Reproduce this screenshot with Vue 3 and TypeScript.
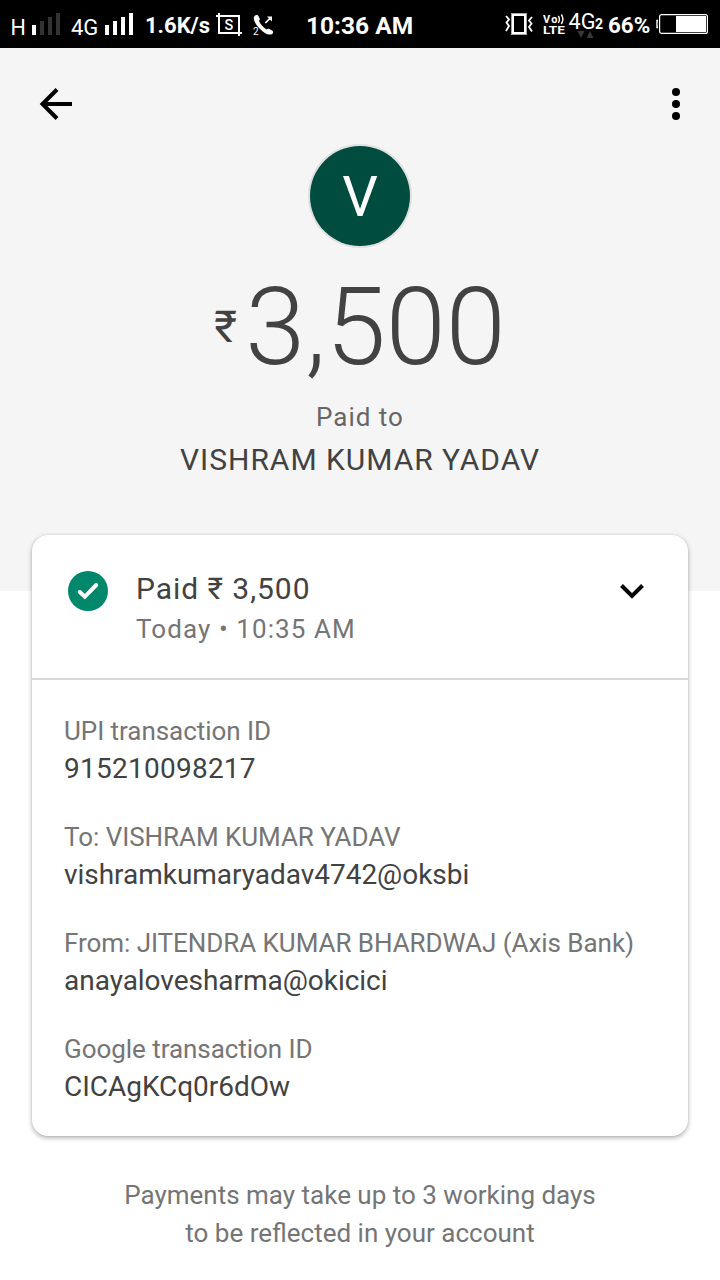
<script setup lang="ts">
interface Detail {
  label: string
  value: string
  numeric?: boolean
}

const details: Detail[] = [
  { label: 'UPI transaction ID', value: '915210098217', numeric: true },
  { label: 'To: VISHRAM KUMAR YADAV', value: 'vishramkumaryadav4742@oksbi' },
  { label: 'From: JITENDRA KUMAR BHARDWAJ (Axis Bank)', value: 'anayalovesharma@okicici' },
  { label: 'Google transaction ID', value: 'CICAgKCq0r6dOw' },
]
</script>

<template>
  <div class="screen">
    <div class="status">
      <span class="net net-h">H</span>
      <svg class="bars" width="28" height="22" viewBox="0 0 28 22">
        <rect x="0" y="12" width="4" height="10" fill="#fff" />
        <rect x="8" y="8" width="4" height="14" fill="#333" />
        <rect x="16" y="4" width="4" height="18" fill="#333" />
        <rect x="24" y="0" width="4" height="22" fill="#333" />
      </svg>
      <span class="net net-4g">4G</span>
      <svg class="bars" width="28" height="22" viewBox="0 0 28 22">
        <path fill="#fff" d="M0 12h4v10H0zM8 8h4v14H8zM16 4h4v18h-4zM24 0h4v22h-4z" />
      </svg>
      <span class="speed">1.6K/s</span>
      <svg class="crop" width="26" height="24" viewBox="0 0 26 24">
        <path d="M3 0v20H26M0 3h23V23" fill="none" stroke="#fff" stroke-width="2" />
        <text x="13" y="16.6" text-anchor="middle" fill="#fff" font-size="14.5" font-weight="500">S</text>
      </svg>
      <svg class="call" width="22" height="22" viewBox="0 0 22 22">
        <path d="M1.6 1C3-.4 4.8-.1 5.6 1.3l1 2c.4 1 .1 1.8-.7 2.5 1.2 3.2 4.4 6.9 7.8 8.6.9-.8 1.7-1 2.6-.5l2.7 1.6c1.5.9 1.5 2.4.2 3.4-3.4 2-8.7-.9-12.9-5.7C2.2 8.7-.7 3.7 1.6 1z" fill="#fff" />
        <path d="M12.3 8 17.5 2.8" fill="none" stroke="#fff" stroke-width="1.7" />
        <path d="M14 1.5h5v5z" fill="#fff" />
        <text x="0" y="20" fill="#fff" font-size="10">2</text>
      </svg>
      <span class="time">10:36 AM</span>
      <svg class="vibrate" width="28" height="22" viewBox="0 0 28 22">
        <rect x="7" y="1" width="14" height="20" fill="none" stroke="#aaa" stroke-width="2" />
        <rect x="8" y="2" width="12" height="18" fill="none" stroke="#fff" stroke-width="2" />
        <path d="M1 3l3 3.5-2.5 3L4 13l-3 5M27 4l-3 3.5 2.5 3L24 14l3 4.5" fill="none" stroke="#fff" stroke-width="1.8" />
      </svg>
      <svg class="volte" width="22" height="22" viewBox="0 0 22 22">
        <g fill="#fff" font-weight="700">
          <text x="0" y="9" font-size="11" textLength="14.5">Vo</text>
          <text x="0" y="20" font-size="11.5" textLength="22" lengthAdjust="spacingAndGlyphs">LTE</text>
        </g>
        <path d="M15.3 2q2.3 3.3 0 7M18.3.5q3.300 4.500 0 9.500" fill="none" stroke="#fff" stroke-width="1.4" />
      </svg>
      <svg class="net4g" width="36" height="28" viewBox="0 0 36 28">
        <text x="-.5" y="17" fill="#fff" font-size="22.5" textLength="27" lengthAdjust="spacingAndGlyphs">4G</text>
        <text x="26" y="17" fill="#fff" font-size="14" font-weight="700">2</text>
        <path d="M8.5 19h7L12 26zM17.5 26h7L21 19z" fill="#383838" />
      </svg>
      <span class="percent">66%</span>
      <svg class="battery" width="52" height="20" viewBox="0 0 52 20">
        <path d="M2 6.5H1v7h1" fill="none" stroke="#fff" stroke-width="1.4" />
        <rect x="3.6" y=".6" width="47.8" height="18.8" rx="2" fill="none" stroke="#fff" stroke-width="1.2" />
        <rect x="20" y="2" width="30" height="16" fill="#fff" />
      </svg>
    </div>

    <header class="hero">
      <div class="toolbar">
        <svg width="32" height="32" viewBox="0 0 32 32">
          <path d="M17 1.5 2.5 16 17 30.5M2.5 16H32" fill="none" stroke="#000" stroke-width="4" />
        </svg>
        <svg width="8" height="32" viewBox="0 0 8 32">
          <circle cx="4" cy="4" r="4" />
          <circle cx="4" cy="16" r="4" />
          <circle cx="4" cy="28" r="4" />
        </svg>
      </div>
      <div class="avatar">V</div>
      <div class="amount"><span class="rupee">₹</span><span class="sum">3,500</span></div>
      <div class="paid-to">Paid to</div>
      <div class="payee">VISHRAM KUMAR YADAV</div>
    </header>

    <main class="card">
      <div class="summary">
        <svg class="check" width="40" height="40" viewBox="0 0 40 40">
          <circle cx="20" cy="20" r="20" fill="#00876c" />
          <path d="M11.8 21 16.8 25.8 28.2 14" fill="none" stroke="#fff" stroke-width="4" stroke-linecap="round" />
        </svg>
        <div class="summary-text">
          <div class="paid">Paid ₹ 3,500</div>
          <div class="when">Today • 10:35 AM</div>
        </div>
        <svg class="chevron" width="24" height="16" viewBox="0 0 24 16">
          <path d="M1.5 1.5 12 12 22.5 1.5" fill="none" stroke="#000" stroke-width="4" />
        </svg>
      </div>
      <dl class="details">
        <div v-for="item in details" :key="item.label" class="detail">
          <dt>{{ item.label }}</dt>
          <dd :class="{ numeric: item.numeric }">{{ item.value }}</dd>
        </div>
      </dl>
    </main>

    <footer class="note">Payments may take up to 3 working days<br />to be reflected in your account</footer>
  </div>
</template>

<style>
body {
  margin: 0;
  background: #fff;
}
</style>

<style scoped>
.screen {
  width: 720px;
  height: 1280px;
  overflow: hidden;
  background: #fff;
  font-family: Roboto, "Noto Sans", sans-serif;
  color: #424242;
}
svg {
  display: block;
  flex: none;
  overflow: visible;
}
.status {
  display: flex;
  align-items: flex-start;
  height: 48px;
  background: #000;
  color: #fff;
  white-space: nowrap;
}
.status span {
  flex: none;
  line-height: 26px;
}
.net {
  font-size: 22px;
  margin-top: 15px;
}
.net-h {
  width: 21.5px;
  margin-left: 10.5px;
  font-size: 21.5px;
}
.net-4g {
  width: 34px;
  margin-left: 11px;
}
.bars {
  margin-top: 13px;
}
.speed {
  width: 71px;
  margin: 13px 0 0 12px;
  font-size: 22px;
  font-weight: 700;
}
.crop {
  margin-top: 13px;
}
.call {
  margin: 15px 0 0 11px;
}
.time {
  width: 199px;
  margin: 13px 0 0 31px;
  font-size: 24.5px;
  font-weight: 700;
}
.vibrate {
  margin-top: 13px;
}
.volte {
  margin: 14px 0 0 10px;
}
.net4g {
  margin: 12px 0 0 4px;
}
.percent {
  width: 48px;
  margin: 12px 0 0 3px;
  font-size: 22.4px;
  font-weight: 700;
}
.battery {
  margin-top: 14px;
}
.hero {
  display: flex;
  flex-direction: column;
  align-items: center;
  height: 543px;
  background: #f5f5f5;
}
.toolbar {
  display: flex;
  align-self: stretch;
  justify-content: space-between;
  padding: 40px 40px 0;
}
.avatar {
  width: 100px;
  height: 100px;
  margin-top: 26px;
  border-radius: 50%;
  background: #004d40;
  box-shadow: 0 0 0 2px #e0e0e0;
  color: #fff;
  font-size: 56px;
  line-height: 102px;
  text-align: center;
}
.amount {
  display: flex;
  height: 126px;
  margin-top: 18px;
}
.rupee {
  width: 31px;
  margin-top: 37px;
  font-size: 44px;
  line-height: 52px;
}
.sum {
  font-size: 108px;
  font-weight: 300;
  line-height: 126px;
}
.paid-to {
  margin-top: 11px;
  font-size: 26px;
  line-height: 32px;
  letter-spacing: 1px;
  color: #666;
}
.payee {
  margin-top: 9px;
  font-size: 30px;
  line-height: 36px;
  letter-spacing: 0.98px;
}
.card {
  position: relative;
  width: 656px;
  height: 601px;
  margin: -56px 32px 0;
  border-radius: 16px;
  background: #fff;
  box-shadow: 0 2px 5px rgba(0, 0, 0, 0.3), 0 0 2px rgba(0, 0, 0, 0.12);
}
.summary {
  display: flex;
  align-items: flex-start;
  box-sizing: border-box;
  height: 145px;
  padding: 36px 44px 0 36px;
  border-bottom: 2px solid #d6d6d6;
}
.summary-text {
  flex: 1;
  margin-left: 28px;
}
.paid {
  font-size: 30px;
  line-height: 36px;
  letter-spacing: 0.95px;
}
.when {
  margin-top: 6px;
  font-size: 26px;
  line-height: 32px;
  letter-spacing: 1.08px;
  color: #757575;
}
.chevron {
  margin-top: 13px;
}
.details {
  display: flex;
  flex-direction: column;
  gap: 34px;
  margin: 0;
  padding: 35px 32px 0;
}
.detail {
  height: 72px;
  white-space: nowrap;
}
dt {
  font-size: 26px;
  line-height: 32px;
  letter-spacing: -0.05px;
  color: #757575;
}
dd {
  margin: 3px 0 0;
  font-size: 28px;
  line-height: 38px;
  letter-spacing: -0.03px;
}
.numeric {
  letter-spacing: 0.25px;
}
.note {
  margin-top: 40px;
  font-size: 26px;
  line-height: 38px;
  text-align: center;
  color: #757575;
}
</style>
